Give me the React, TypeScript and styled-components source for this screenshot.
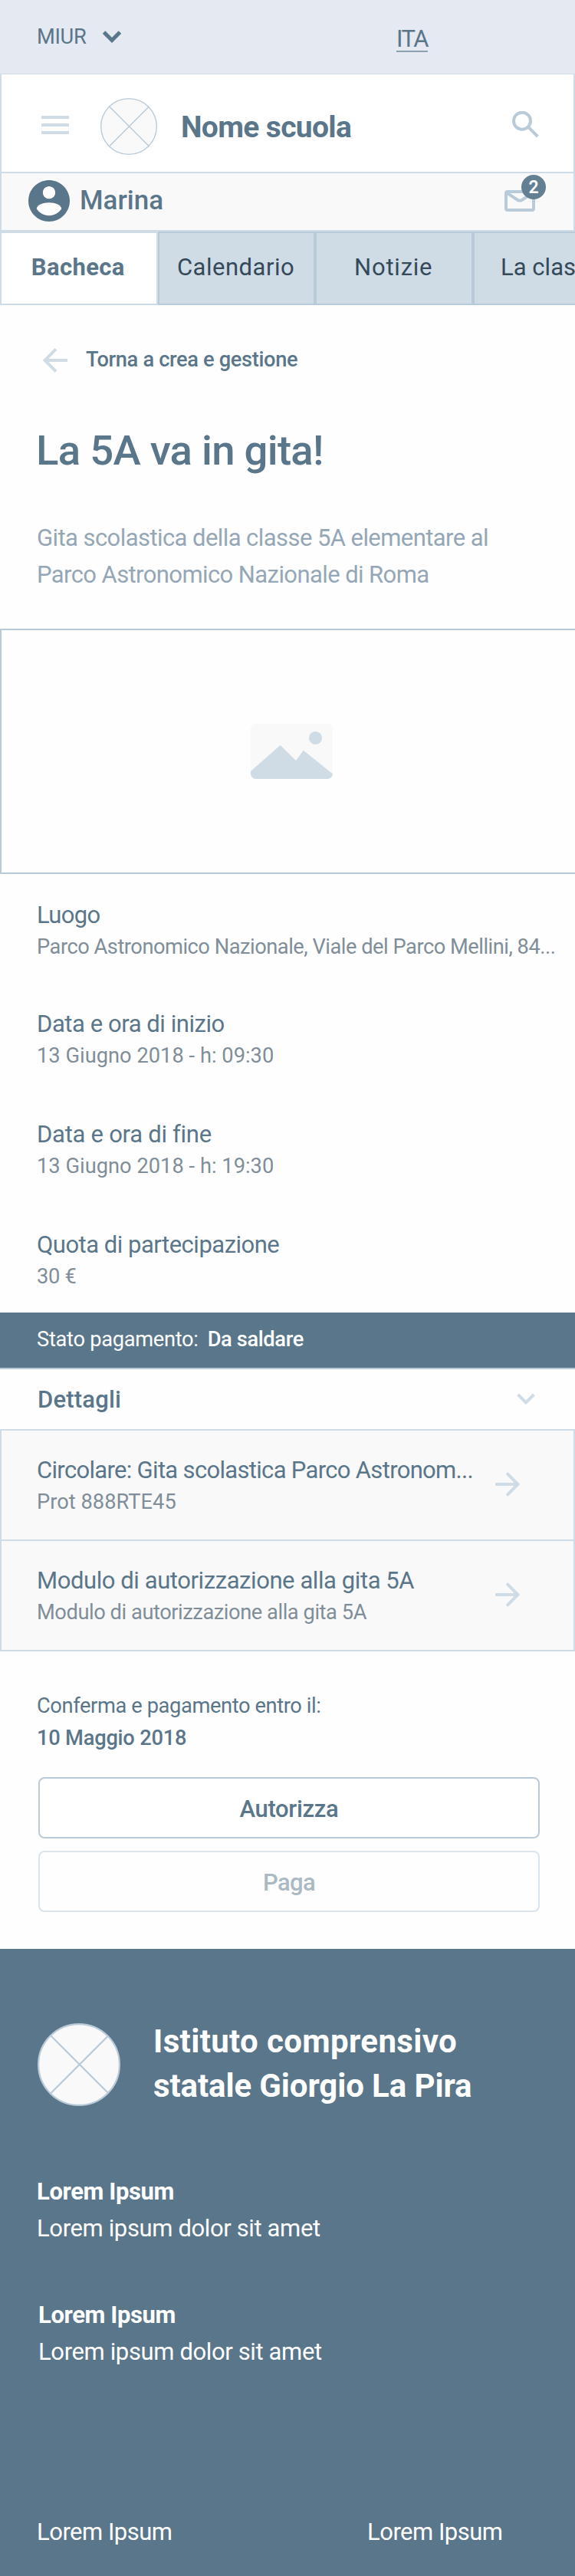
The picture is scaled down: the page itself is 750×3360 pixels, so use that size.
import React from "react";
import styled, { createGlobalStyle } from "styled-components";

const color = {
  primary: "#5a768a",
  ink: "#34495a",
  line: "#b9cbd9",
  pale: "#cfdce5",
  surface: "#f9f9f9",
  topbar: "#e5e9f1",
  muted: "#808e99",
  lead: "#95a7b6",
};

const Global = createGlobalStyle`
  *, *::before, *::after { box-sizing: border-box; }
  body { margin: 0; background: #fff; }
  svg { display: block; flex: none; }
`;

const Page = styled.div`
  width: 750px;
  overflow: hidden;
  background: #fefefe;
  color: ${color.primary};
  font-family: Roboto, "Liberation Sans", sans-serif;
  font-weight: 400;
  font-size: 31px;
`;

type TextProps = { $track?: number; $strong?: boolean };

const Text = styled.span<TextProps>`
  white-space: nowrap;
  letter-spacing: ${(p) => p.$track ?? 0}px;
  font-weight: ${(p) => (p.$strong ? 500 : "inherit")};
`;

const SmallText = styled(Text)`
  font-size: 27.25px;
`;

const TopBar = styled.div`
  display: flex;
  justify-content: space-between;
  height: 96px;
  padding: 28px 192px 0 48px;
  background: ${color.topbar};
`;

const OrgSwitch = styled.div`
  display: flex;
  align-items: center;
  gap: 21px;
  height: 40px;
`;

const Language = styled.a`
  align-self: flex-start;
  height: 40px;
  padding-top: 3px;
  border-bottom: 2px solid #8ba1b0;
  line-height: 40px;
  letter-spacing: -1.5px;
`;

const Header = styled.header`
  display: flex;
  align-items: center;
  height: 130px;
  padding: 5px 44px 0 52px;
  border: 2px solid ${color.pale};
  border-top-width: 1px;
  background: #fff;
`;

const SchoolName = styled.h1`
  flex: 1;
  margin: 5px 0 0 31px;
  font-size: 39px;
  font-weight: 700;
  line-height: 48px;
  letter-spacing: -0.66px;
`;

const HeaderLogo = styled.div`
  margin: 3px 0 0 41px;
`;

const UserBar = styled.div`
  display: flex;
  align-items: center;
  height: 76px;
  padding: 0 40px 3px 35px;
  border: solid ${color.pale};
  border-width: 0 2px 2px;
  background: ${color.surface};
`;

const UserName = styled.span`
  flex: 1;
  margin-left: 13px;
  font-size: 35px;
  font-weight: 500;
`;

const Inbox = styled.div`
  position: relative;
  padding-right: 10px;
`;

const Badge = styled.span`
  position: absolute;
  top: -20px;
  right: -4px;
  width: 32px;
  height: 32px;
  border-radius: 50%;
  background: #647f92;
  color: #fff;
  font-size: 23px;
  font-weight: 600;
  line-height: 33px;
  text-align: center;
`;

const Tabs = styled.nav`
  display: flex;
  height: 96px;
`;

const Tab = styled.a<{ $active?: boolean; $track?: number; $cut?: boolean }>`
  flex: 0 0 205.7px;
  padding: ${(p) => (p.$cut ? "0 0 0 34px" : "0 2px 0 0")};
  border: 2px solid ${(p) => (p.$active ? color.pale : color.line)};
  background: ${(p) => (p.$active ? "#fff" : color.pale)};
  color: ${(p) => (p.$active ? color.primary : color.ink)};
  font-weight: ${(p) => (p.$active ? 700 : 400)};
  letter-spacing: ${(p) => p.$track ?? 0}px;
  line-height: 90px;
  text-align: ${(p) => (p.$cut ? "left" : "center")};
  white-space: nowrap;
`;

const BackLink = styled.a`
  display: flex;
  align-items: center;
  gap: 24px;
  height: 48px;
  margin: 48px 0 0 56px;
`;

const BackLabel = styled(SmallText)`
  padding-bottom: 3px;
`;

const Title = styled.h2`
  margin: 57px 48px 0 47px;
  font-size: 54.5px;
  font-weight: 500;
  line-height: 72px;
  letter-spacing: -0.73px;
`;

const Lead = styled.p`
  display: flex;
  flex-direction: column;
  margin: 55px 0 46px 48px;
  color: ${color.lead};
  line-height: 48px;
`;

const Cover = styled.div`
  display: flex;
  align-items: center;
  justify-content: center;
  height: 320px;
  padding-left: 8px;
  border: 2px solid ${color.line};
  border-right: 0;
`;

const Facts = styled.section`
  padding: 34px 0 25px 48px;
`;

const Entry = styled.div`
  display: flex;
  flex-direction: column;
  line-height: 40px;
`;

const EntryNote = styled(SmallText)`
  color: ${color.muted};
  line-height: 43px;
`;

const Fact = styled(Entry)`
  & + & { margin-top: 61px; }
  &:nth-child(2) { margin-top: 59px; }
`;

const StatusBar = styled.div`
  display: flex;
  align-items: center;
  gap: 12px;
  height: 74px;
  padding: 0 48px 3px;
  border-bottom: 2px solid ${color.line};
  background: ${color.primary};
  color: #fff;
`;

const DetailsHeader = styled.div`
  display: flex;
  align-items: center;
  justify-content: space-between;
  height: 78px;
  padding: 0 52px 0 49px;
`;

const Documents = styled.div`
  border: 2px solid ${color.pale};
  background: ${color.surface};
`;

const DocumentRow = styled.a`
  display: flex;
  align-items: flex-start;
  justify-content: space-between;
  height: 142px;
  padding: 32px 70px 0 46px;

  & + & {
    height: 144px;
    border-top: 2px solid ${color.pale};
  }

  svg { margin-top: 22px; }
`;

const Confirm = styled.section`
  display: flex;
  flex-direction: column;
  padding: 50px 46px 48px 50px;
`;

const Deadline = styled.div`
  display: flex;
  flex-direction: column;
  margin: 0 0 30px -2px;
  line-height: 42px;
`;

const Action = styled.button<{ $track: number }>`
  height: 80px;
  padding: 3px 0 0;
  border: 2px solid ${color.line};
  border-radius: 8px;
  background: #fff;
  color: ${color.primary};
  font: inherit;
  font-weight: 500;
  letter-spacing: ${(p) => p.$track}px;

  & + & { margin-top: 16px; }
  &:disabled { opacity: 0.5; }
`;

const Footer = styled.footer`
  height: 818px;
  padding: 92px 48px 0;
  background: ${color.primary};
  color: #fff;
  line-height: 48px;
`;

const Brand = styled.div`
  display: flex;
  align-items: center;
  gap: 43px;
  margin: 0 0 85px 1px;

  svg { margin-top: 2px; }
`;

const BrandName = styled.div`
  display: flex;
  flex-direction: column;
  font-size: 42px;
  font-weight: 700;
  line-height: 58px;
`;

const FooterGroup = styled.div<{ $indent?: number }>`
  display: flex;
  flex-direction: column;
  margin: 0 0 65px ${(p) => p.$indent ?? 0}px;
`;

const FooterHeading = styled(Text)`
  font-weight: 700;
`;

const FooterLinks = styled.div`
  display: grid;
  grid-template-columns: 431px auto;
  padding-top: 122px;
`;

const MenuIcon = () => (
  <svg width="36" height="24" viewBox="0 0 36 24" fill={color.pale}>
    <path d="M0 0h36v4H0zM0 10h36v4H0zM0 20h36v4H0z" />
  </svg>
);

const Crest = ({ size, stroke }: { size: number; stroke: number }) => (
  <svg width={size} height={size} viewBox="0 0 108 108" fill="none" stroke={color.line} strokeWidth={stroke}>
    <circle cx="54" cy="54" r={54 - stroke / 2} fill={color.surface} />
    <path d="M17.5 16.5l75 75M92 16.5l-75 75" />
  </svg>
);

const SearchIcon = () => (
  <svg width="36" height="36" viewBox="0 0 36 36" fill="none" stroke={color.line} strokeWidth="4">
    <circle cx="13" cy="12.700" r="11" />
    <path d="M22 21.700l11.300 11.300" />
  </svg>
);

const AvatarIcon = () => (
  <svg width="54" height="54" viewBox="2 2 20 20">
    <circle cx="12" cy="12" r="9" fill="#fff" />
    <path
      fill={color.primary}
      d="M12 2C6.48 2 2 6.48 2 12s4.48 10 10 10 10-4.48 10-10S17.52 2 12 2zm0 3c1.66 0 3 1.34 3 3s-1.34 3-3 3-3-1.34-3-3 1.34-3 3-3zm0 14.1c-2.5 0-4.7-1.3-6-3.22.03-1.99 3-3.08 6-3.08s5.97 1.09 6 3.08c-1.3 1.92-3.5 3.22-6 3.22z"
    />
  </svg>
);

const MailIcon = () => (
  <svg width="40" height="28" viewBox="0 0 40 28" fill="none" stroke={color.line} strokeWidth="4">
    <rect x="2" y="2" width="36" height="24" rx="2" />
    <path d="M3 3.5l14 9.2q3 1.8 6 0l14-9.2" />
  </svg>
);

const Chevron = ({ stroke, width }: { stroke: string; width: number }) => (
  <svg width="24" height="16" viewBox="0 0 24 16" fill="none" stroke={stroke} strokeWidth={width}>
    <path d="M1.6 2l10.4 10.4L22.4 2" />
  </svg>
);

const Arrow = ({ back }: { back?: boolean }) => (
  <svg width="32" height="32" viewBox="0 0 32 32" fill="none" stroke={color.pale} strokeWidth="4">
    <path d={back ? "M32 16H3M17 1.4L2.6 16 17 30.6" : "M0 16h29M15 1.4L29.4 16 15 30.6"} />
  </svg>
);

const PhotoIcon = () => (
  <svg width="107" height="72" viewBox="0 0 107 72">
    <rect width="107" height="72" rx="6" fill={color.surface} />
    <g fill={color.pale}>
      <circle cx="84.5" cy="18.5" r="8.6" />
      <path d="M0 62L38.6 28 59 48l9.7-13.3L107 65.500q-1 6.500-7 6.500H7q-6 0-7-6.500z" />
    </g>
  </svg>
);

const facts = [
  { label: "Luogo", track: -0.7, value: "Parco Astronomico Nazionale, Viale del Parco Mellini, 84...", valueTrack: -0.48 },
  { label: "Data e ora di inizio", track: -0.44, value: "13 Giugno 2018 - h: 09:30", valueTrack: 0.02 },
  { label: "Data e ora di fine", track: -0.27, value: "13 Giugno 2018 - h: 19:30", valueTrack: 0.02 },
  { label: "Quota di partecipazione", track: -0.5, value: "30 €", valueTrack: -0.3 },
];

const documents = [
  { label: "Circolare: Gita scolastica Parco Astronom...", track: -0.68, note: "Prot 888RTE45", noteTrack: 0.03 },
  { label: "Modulo di autorizzazione alla gita 5A", track: -0.42, note: "Modulo di autorizzazione alla gita 5A", noteTrack: -0.44 },
];

export default function App() {
  return (
    <Page>
      <Global />
      <TopBar>
        <OrgSwitch>
          <SmallText $track={-0.29}>MIUR</SmallText>
          <Chevron stroke={color.primary} width={5} />
        </OrgSwitch>
        <Language>ITA</Language>
      </TopBar>
      <Header>
        <MenuIcon />
        <HeaderLogo>
          <Crest size={74} stroke={2} />
        </HeaderLogo>
        <SchoolName>Nome scuola</SchoolName>
        <SearchIcon />
      </Header>
      <UserBar>
        <AvatarIcon />
        <UserName>Marina</UserName>
        <Inbox>
          <MailIcon />
          <Badge>2</Badge>
        </Inbox>
      </UserBar>
      <Tabs>
        <Tab $active $track={0.37}>Bacheca</Tab>
        <Tab $track={0.5}>Calendario</Tab>
        <Tab $track={0.77}>Notizie</Tab>
        <Tab $track={0.02} $cut>La clas</Tab>
      </Tabs>

      <main>
        <BackLink>
          <Arrow back />
          <BackLabel $strong $track={-0.35}>Torna a crea e gestione</BackLabel>
        </BackLink>
        <Title>La 5A va in gita!</Title>
        <Lead>
          <Text $track={-0.57}>Gita scolastica della classe 5A elementare al</Text>
          <Text $track={-0.59}>Parco Astronomico Nazionale di Roma</Text>
        </Lead>
        <Cover>
          <PhotoIcon />
        </Cover>
        <Facts>
          {facts.map((f) => (
            <Fact key={f.label}>
              <Text $track={f.track}>{f.label}</Text>
              <EntryNote $track={f.valueTrack}>{f.value}</EntryNote>
            </Fact>
          ))}
        </Facts>
        <StatusBar>
          <SmallText $track={-0.29}>Stato pagamento:</SmallText>
          <SmallText $strong $track={-0.37}>Da saldare</SmallText>
        </StatusBar>
        <DetailsHeader>
          <Text $strong $track={0.19}>Dettagli</Text>
          <Chevron stroke={color.pale} width={4} />
        </DetailsHeader>
        <Documents>
          {documents.map((d) => (
            <DocumentRow key={d.label}>
              <Entry>
                <Text $track={d.track}>{d.label}</Text>
                <EntryNote $track={d.noteTrack}>{d.note}</EntryNote>
              </Entry>
              <Arrow />
            </DocumentRow>
          ))}
        </Documents>
        <Confirm>
          <Deadline>
            <SmallText $track={-0.38}>Conferma e pagamento entro il:</SmallText>
            <SmallText $strong $track={-0.22}>10 Maggio 2018</SmallText>
          </Deadline>
          <Action $track={-0.34}>Autorizza</Action>
          <Action $track={-0.63} disabled>Paga</Action>
        </Confirm>
      </main>

      <Footer>
        <Brand>
          <Crest size={108} stroke={2.2} />
          <BrandName>
            <Text $track={0.36}>Istituto comprensivo</Text>
            <Text $track={-0.11}>statale Giorgio La Pira</Text>
          </BrandName>
        </Brand>
        <FooterGroup>
          <FooterHeading $track={-0.39}>Lorem Ipsum</FooterHeading>
          <Text $track={-0.37}>Lorem ipsum dolor sit amet</Text>
        </FooterGroup>
        <FooterGroup $indent={2}>
          <FooterHeading $track={-0.39}>Lorem Ipsum</FooterHeading>
          <Text $track={-0.37}>Lorem ipsum dolor sit amet</Text>
        </FooterGroup>
        <FooterLinks>
          <Text $track={-0.5}>Lorem Ipsum</Text>
          <Text $track={-0.5}>Lorem Ipsum</Text>
        </FooterLinks>
      </Footer>
    </Page>
  );
}
